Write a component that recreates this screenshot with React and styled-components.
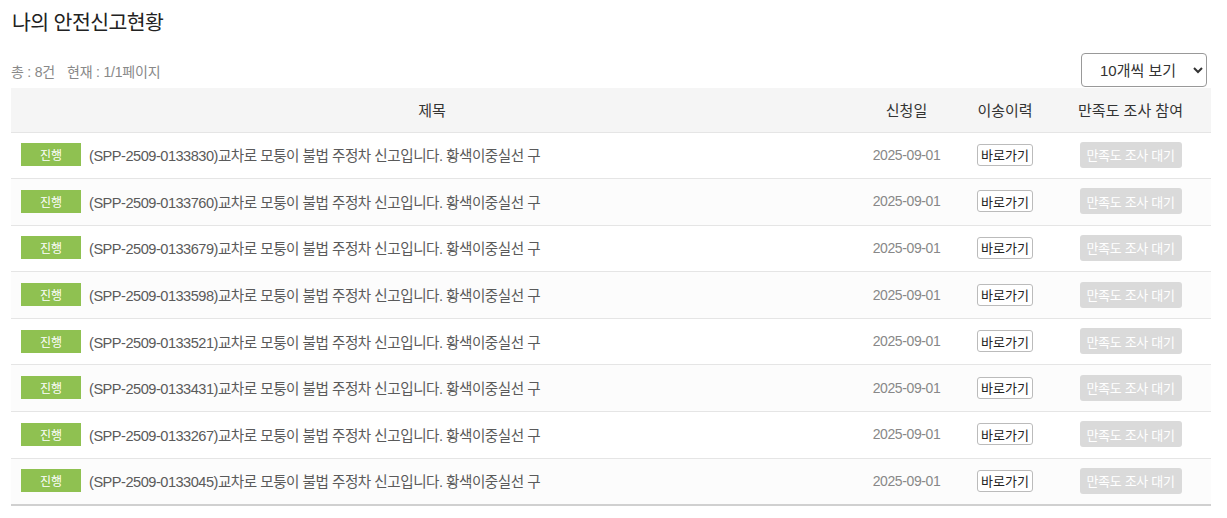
import styled, { createGlobalStyle } from "styled-components";

const GlobalStyle = createGlobalStyle`
  html, body {
    margin: 0;
    padding: 0;
    background: #fff;
    font-family: "Liberation Sans", "Noto Sans CJK KR", sans-serif;
  }
  * {
    box-sizing: border-box;
  }
`;

const Page = styled.div`
  padding: 0 16px 0 11px;
`;

const Heading = styled.h2`
  margin: 8px 0 15px 1px;
  font-size: 20.5px;
  line-height: 30px;
  font-weight: 400;
  color: #222;
  letter-spacing: -0.6px;
`;

const Toolbar = styled.div`
  display: flex;
  justify-content: space-between;
  align-items: flex-end;
  height: 35px;
`;

const Count = styled.p`
  margin: 0 0 7px;
  font-size: 14px;
  color: #888;
  letter-spacing: -0.2px;

  span + span {
    margin-left: 12px;
  }
`;

const PageSize = styled.select`
  width: 126px;
  height: 34px;
  margin-right: 4px;
  margin-bottom: 1px;
  padding: 0 10px 0 14px;
  border: 1px solid #999;
  border-radius: 4px;
  background: #fff;
  font-family: inherit;
  font-size: 15px;
  color: #333;
`;

const Table = styled.table`
  width: 100%;
  border-collapse: collapse;
  border-bottom: 2px solid #d0d0d0;
`;

const Th = styled.th`
  height: 44px;
  padding: 0;
  background: #f5f5f5;
  border-bottom: 1px solid #e5e5e5;
  font-size: 15px;
  font-weight: 400;
  color: #333;
  width: ${(p) => p.$width || "auto"};
`;

const Row = styled.tr`
  background: ${(p) => (p.$even ? "#fcfcfc" : "#fff")};
`;

const Td = styled.td`
  height: 46.6px;
  padding: 0 0 1px;
  border-bottom: 1px solid #e5e5e5;
  text-align: ${(p) => p.$align || "center"};
  font-size: 14px;
  color: #888;
`;

const TitleCell = styled.div`
  display: flex;
  align-items: center;
  gap: 8px;
  padding-left: 10px;
`;

const Badge = styled.span`
  display: inline-flex;
  align-items: center;
  justify-content: center;
  width: 60px;
  height: 23px;
  background: #8fc151;
  color: #fff;
  font-size: 12px;
`;

const Subject = styled.span`
  font-size: 14.6px;
  color: #5a5a5a;
  letter-spacing: -0.5px;
  white-space: nowrap;
`;

const DateText = styled.span`
  font-size: 14px;
  color: #888;
  letter-spacing: -0.4px;
`;

const LinkButton = styled.button`
  height: 22px;
  width: 56px;
  padding: 0;
  border: 1px solid #bbb;
  border-radius: 3px;
  background: #fff;
  font-family: inherit;
  font-size: 13px;
  color: #222;
  cursor: pointer;
`;

const SurveyButton = styled.button`
  width: 102px;
  height: 26px;
  padding: 0;
  border: none;
  border-radius: 3px;
  background: #dadada;
  font-family: inherit;
  font-size: 13px;
  color: #fff;
  letter-spacing: -0.3px;
`;

const reports = [
  "SPP-2509-0133830",
  "SPP-2509-0133760",
  "SPP-2509-0133679",
  "SPP-2509-0133598",
  "SPP-2509-0133521",
  "SPP-2509-0133431",
  "SPP-2509-0133267",
  "SPP-2509-0133045",
];

export default function App() {
  return (
    <>
      <GlobalStyle />
      <Page>
        <Heading>나의 안전신고현황</Heading>
        <Toolbar>
          <Count>
            <span>총 : 8건</span>
            <span>현재 : 1/1페이지</span>
          </Count>
          <PageSize defaultValue="10">
            <option value="10">10개씩 보기</option>
            <option value="20">20개씩 보기</option>
            <option value="50">50개씩 보기</option>
          </PageSize>
        </Toolbar>
        <Table>
          <thead>
            <tr>
              <Th>제목</Th>
              <Th $width="107px">신청일</Th>
              <Th $width="90px">이송이력</Th>
              <Th $width="161px">만족도 조사 참여</Th>
            </tr>
          </thead>
          <tbody>
            {reports.map((id, i) => (
              <Row key={id} $even={i % 2 === 1}>
                <Td $align="left">
                  <TitleCell>
                    <Badge>진행</Badge>
                    <Subject>({id})교차로 모퉁이 불법 주정차 신고입니다. 황색이중실선 구</Subject>
                  </TitleCell>
                </Td>
                <Td>
                  <DateText>2025-09-01</DateText>
                </Td>
                <Td>
                  <LinkButton>바로가기</LinkButton>
                </Td>
                <Td>
                  <SurveyButton disabled>만족도 조사 대기</SurveyButton>
                </Td>
              </Row>
            ))}
          </tbody>
        </Table>
      </Page>
    </>
  );
}
